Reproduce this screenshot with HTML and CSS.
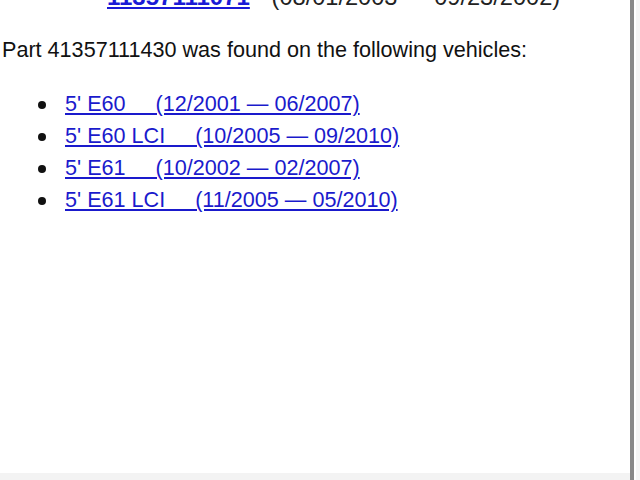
FILE: index.html
```html
<!DOCTYPE html>
<html>
<head>
<meta charset="utf-8">
<link rel="stylesheet" href="styles.css">
</head>
<body>
<div class="frame">
  <div class="page">
    <div class="content">
      <div class="top-row">
        <a class="part-link" href="#">11357111071</a>
        <span class="dates">(08/01/2003 — 09/23/2002)</span>
      </div>
      <p class="found">Part 41357111430 was found on the following vehicles:</p>
      <ul class="vehicles">
        <li><a href="#">5' E60&nbsp;&nbsp;&nbsp;&nbsp;&nbsp;(12/2001&nbsp;—&nbsp;06/2007)</a></li>
        <li><a href="#">5' E60 LCI&nbsp;&nbsp;&nbsp;&nbsp;&nbsp;(10/2005&nbsp;—&nbsp;09/2010)</a></li>
        <li><a href="#">5' E61&nbsp;&nbsp;&nbsp;&nbsp;&nbsp;(10/2002&nbsp;—&nbsp;02/2007)</a></li>
        <li><a href="#">5' E61 LCI&nbsp;&nbsp;&nbsp;&nbsp;&nbsp;(11/2005&nbsp;—&nbsp;05/2010)</a></li>
      </ul>
    </div>
    <div class="bottom-strip"></div>
  </div>
  <div class="scrollbar"></div>
</div>
</body>
</html>
```

FILE: styles.css
```css
html, body {
  margin: 0;
  padding: 0;
  width: 640px;
  height: 480px;
  overflow: hidden;
  background: #ffffff;
}

.frame {
  display: flex;
  width: 640px;
  height: 480px;
}

.page {
  flex: 1;
  display: flex;
  flex-direction: column;
  overflow: hidden;
}

.content {
  flex: 1;
  padding-left: 2px;
  font-family: "Liberation Sans", Arial, sans-serif;
  color: #111;
}

.top-row {
  margin-top: -17px;
  height: 28px;
  line-height: 28px;
  font-size: 24px;
  padding-left: 105px;
  white-space: nowrap;
}

.part-link {
  color: #1a1ad6;
  font-weight: bold;
  text-decoration: underline;
}

.dates {
  margin-left: 15px;
  font-size: 23.6px;
  color: #222;
}

.found {
  margin: 26px 0 0 0;
  font-size: 21.6px;
  line-height: 26px;
}

.vehicles {
  margin: 25px 0 0 0;
  padding-left: 63px;
  font-size: 21.6px;
  line-height: 32px;
}

.vehicles li {
  margin: 0;
  list-style: none;
}

.vehicles li::before {
  content: "";
  display: inline-block;
  width: 8px;
  height: 8px;
  border-radius: 50%;
  background: #111;
  margin-left: -27px;
  margin-right: 19px;
  vertical-align: middle;
}

.vehicles a {
  color: #1a1acc;
  text-decoration: underline;
}

.bottom-strip {
  height: 7px;
  background: #f3f3f3;
}

.scrollbar {
  width: 4px;
  margin-right: 6px;
  background: #888888;
  box-shadow: 6px 0 0 #f5f5f5;
}
```
